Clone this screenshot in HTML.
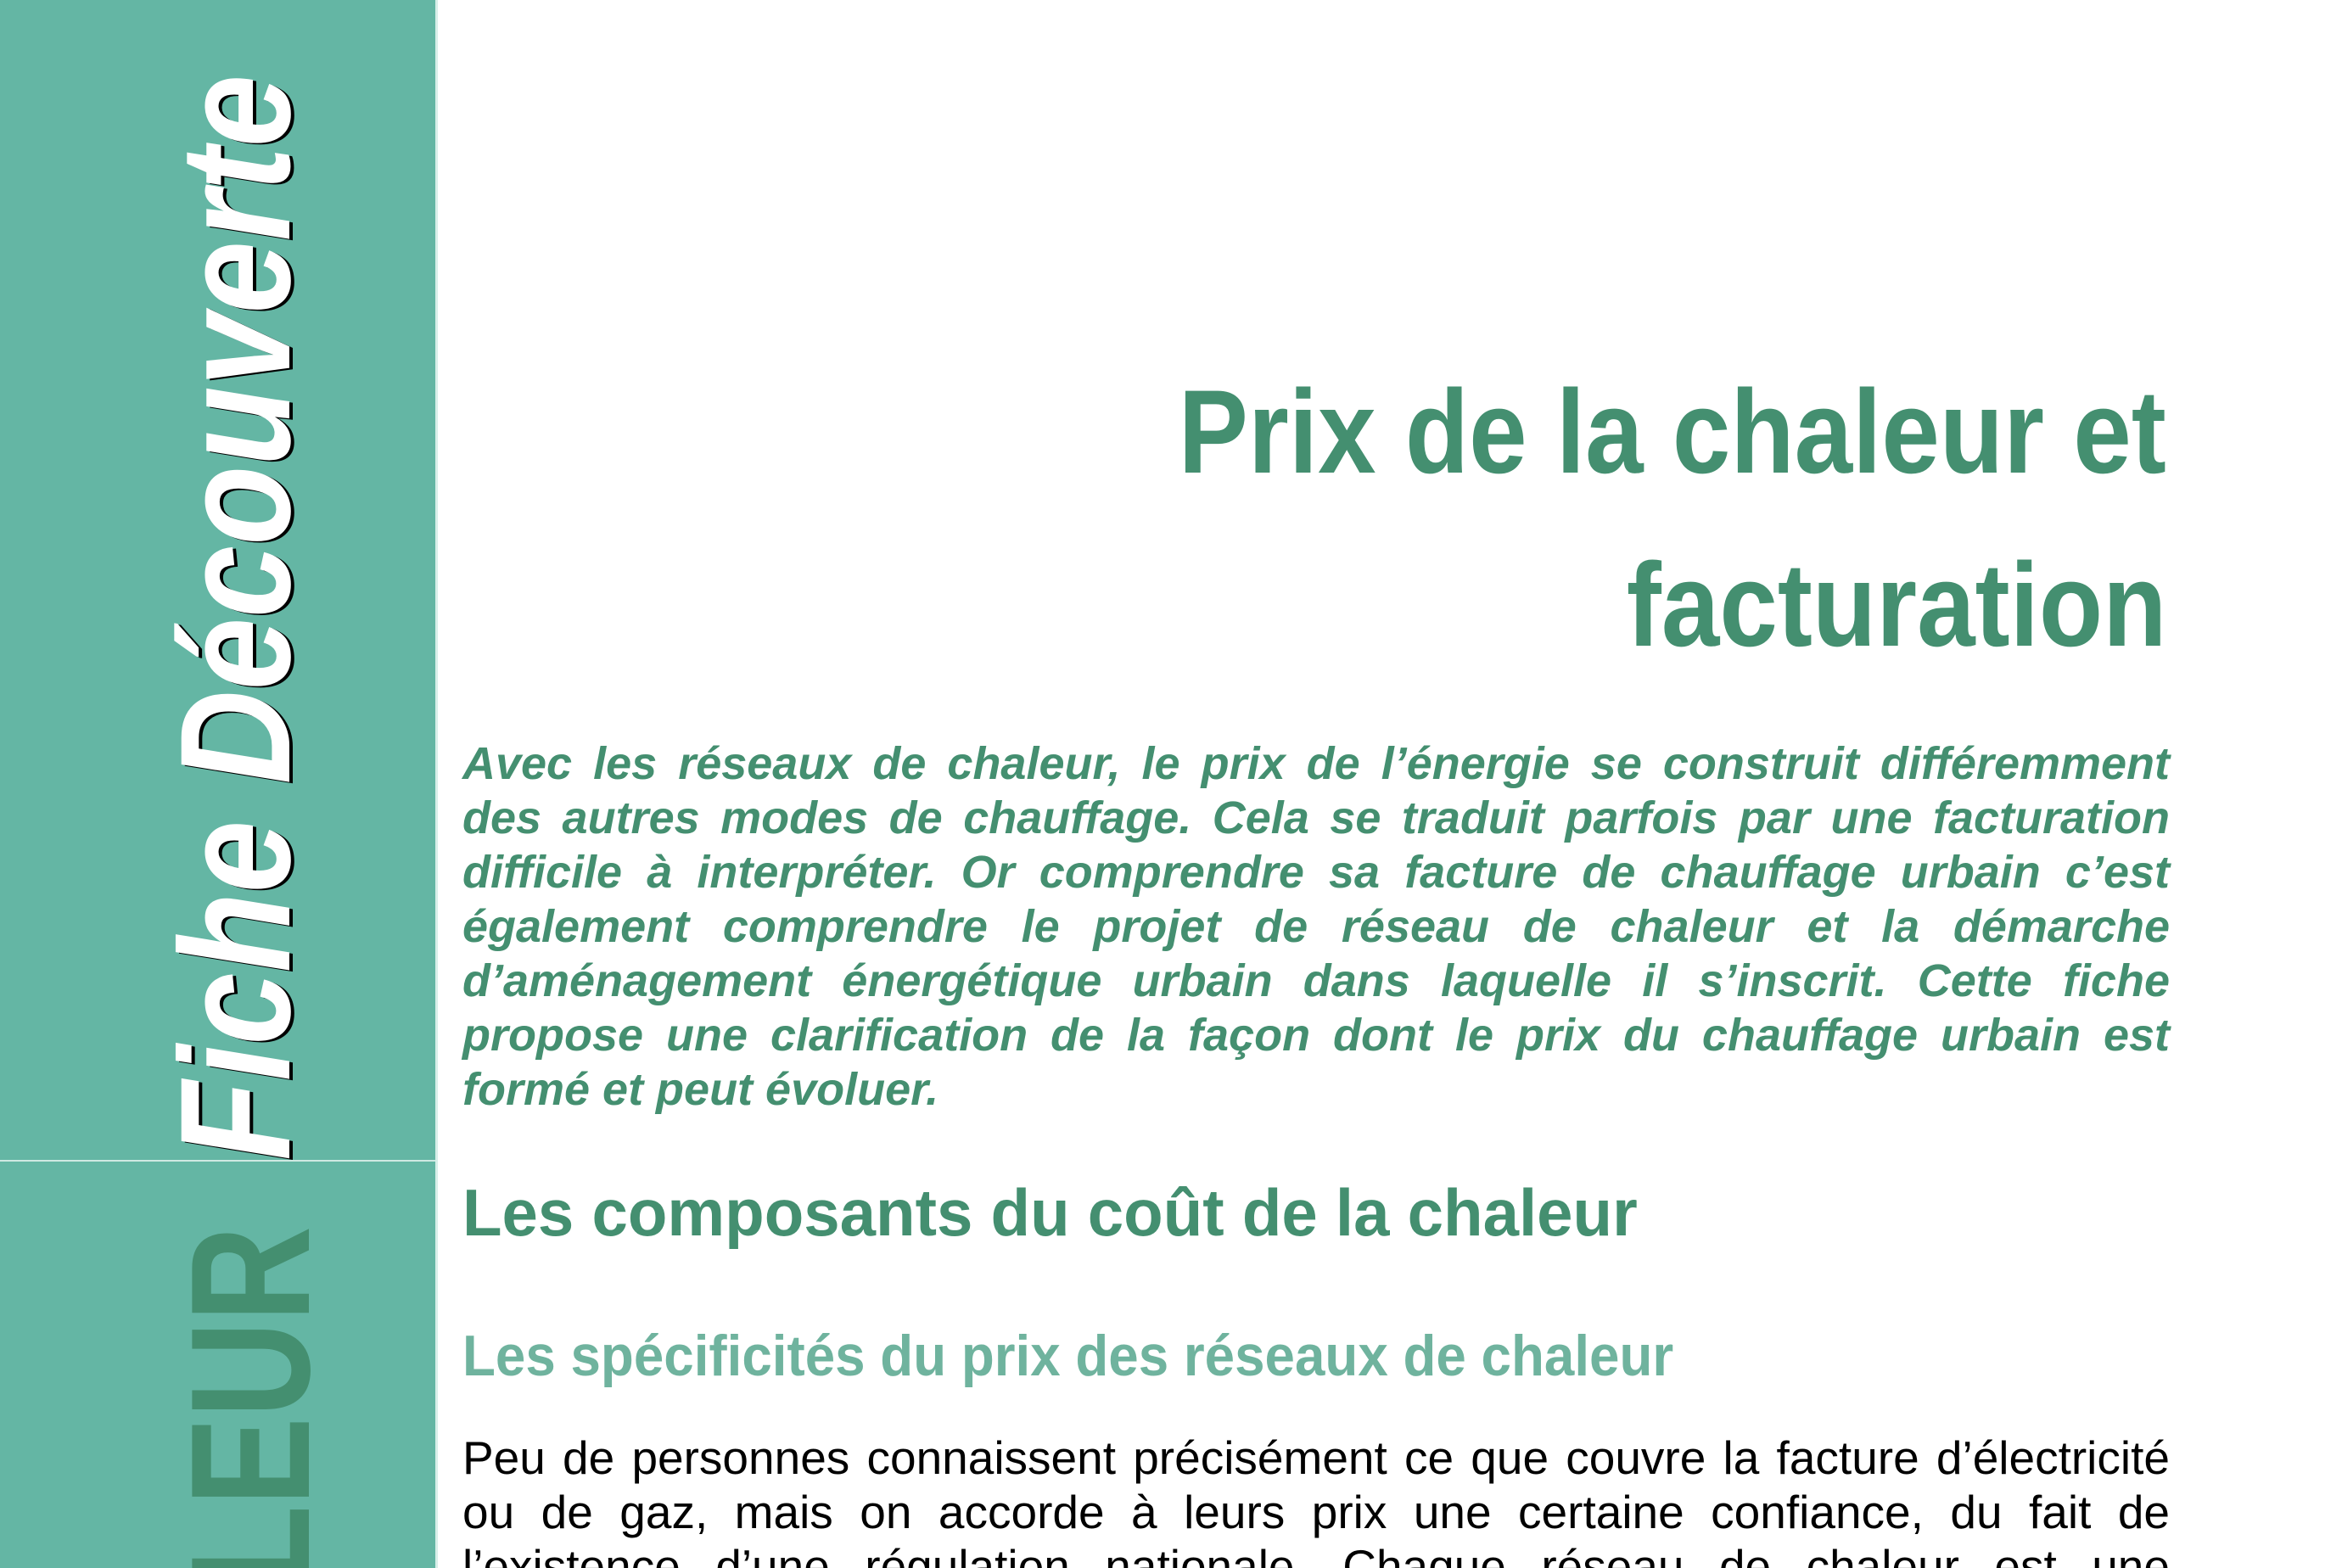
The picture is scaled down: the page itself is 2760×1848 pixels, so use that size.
<!DOCTYPE html>
<html><head><meta charset="utf-8"><style>
html,body{margin:0;padding:0;overflow:hidden;width:2760px;height:1848px;}
#wrap{width:2760px;height:1848px;overflow:hidden;position:relative;background:#fff;font-family:"Liberation Sans",sans-serif;}
.side{position:absolute;left:0;top:0;width:513px;height:1848px;background:#64b6a4;border-right:3px solid #d8efe9;}
.hl{position:absolute;left:0;top:1367px;width:513px;height:2px;background:#cfe9e2;}
.rot{position:absolute;transform-origin:0 0;white-space:nowrap;}
.fiche{left:186px;top:1368px;height:185px;font-size:185px;line-height:185px;font-weight:bold;font-style:italic;color:#fff;transform:rotate(-90deg) scaleX(0.83);text-shadow:-2px 4px 0 #000;}
.leur{left:196px;top:2615px;width:1500px;text-align:right;height:200px;font-size:200px;line-height:200px;font-weight:bold;color:#448f70;transform:rotate(-90deg) scaleX(0.78);}
.t{position:absolute;right:207px;font-size:140px;font-weight:bold;color:#448f70;line-height:1;white-space:nowrap;transform-origin:right bottom;transform:scaleX(0.88);}
.intro{position:absolute;left:545px;width:2012px;top:868px;font-size:54px;line-height:64px;font-weight:bold;font-style:italic;color:#448f70;}
.j{display:block;text-align:justify;text-align-last:justify;white-space:nowrap;}
.l{display:block;text-align:left;white-space:nowrap;}
.h2{position:absolute;left:545px;top:1390px;font-size:78px;font-weight:bold;color:#448f70;white-space:nowrap;transform-origin:left top;transform:scaleX(0.977);line-height:1;}
.h3{position:absolute;left:545px;top:1564px;font-size:68px;font-weight:bold;color:#6fb39e;white-space:nowrap;transform-origin:left top;transform:scaleX(0.937);line-height:1;}
.body{position:absolute;left:545px;width:2012px;top:1686px;font-size:55px;line-height:64px;color:#000;}
</style></head><body><div id="wrap">
<div class="side"></div>
<div class="hl"></div>
<div class="rot fiche">Fiche Découverte</div>
<div class="rot leur">CHALEUR</div>
<div class="t" style="top:439px">Prix de la chaleur et</div>
<div class="t" style="top:643px">facturation</div>
<div class="intro"><span class="j">Avec les réseaux de chaleur, le prix de l’énergie se construit différemment</span><span class="j">des autres modes de chauffage. Cela se traduit parfois par une facturation</span><span class="j">difficile à interpréter. Or comprendre sa facture de chauffage urbain c’est</span><span class="j">également comprendre le projet de réseau de chaleur et la démarche</span><span class="j">d’aménagement énergétique urbain dans laquelle il s’inscrit. Cette fiche</span><span class="j">propose une clarification de la façon dont le prix du chauffage urbain est</span><span class="l">formé et peut évoluer.</span></div>
<div class="h2">Les composants du coût de la chaleur</div>
<div class="h3">Les spécificités du prix des réseaux de chaleur</div>
<div class="body"><span class="j">Peu de personnes connaissent précisément ce que couvre la facture d’électricité</span><span class="j">ou de gaz, mais on accorde à leurs prix une certaine confiance, du fait de</span><span class="j">l’existence d’une régulation nationale. Chaque réseau de chaleur est une</span></div>
</div></body></html>
